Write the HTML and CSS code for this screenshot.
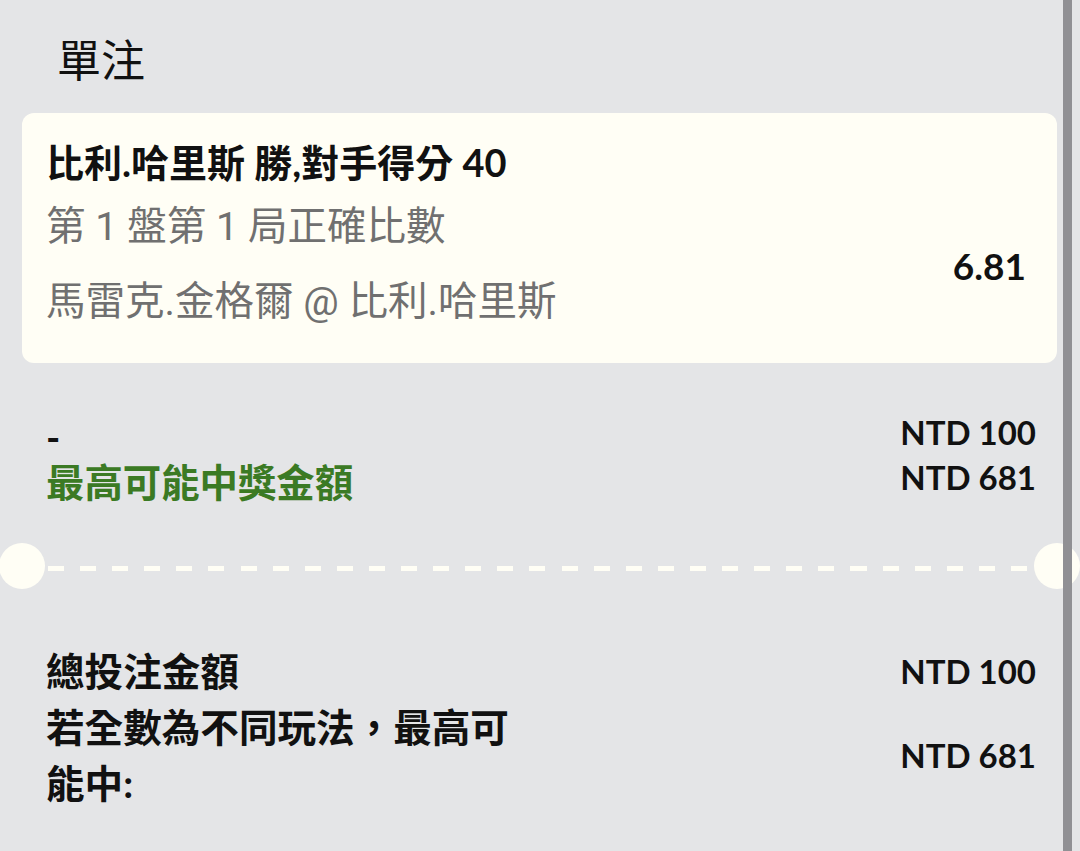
FILE: index.html
```html
<!DOCTYPE html>
<html lang="zh-Hant">
<head>
<meta charset="utf-8">
<title>單注</title>
<link rel="stylesheet" href="styles.css">
</head>
<body>
<div class="screen">
  <h1 class="title">單注</h1>

  <section class="card">
    <div class="card-main">
      <div class="pick">比利.哈里斯 勝,對手得分 40</div>
      <div class="market">第 1 盤第 1 局正確比數</div>
      <div class="event">馬雷克.金格爾 @ 比利.哈里斯</div>
    </div>
    <div class="odds">6.81</div>
  </section>

  <section class="stake">
    <div class="stake-labels">
      <div class="dash">-</div>
      <div class="win-label">最高可能中獎金額</div>
    </div>
    <div class="stake-values">
      <div class="amount">NTD 100</div>
      <div class="amount">NTD 681</div>
    </div>
  </section>

  <div class="divider">
    <span class="notch"></span>
    <span class="dashes"></span>
    <span class="notch"></span>
  </div>

  <section class="totals">
    <div class="total-label">總投注金額</div>
    <div class="amount total-value">NTD 100</div>
    <div class="total-label wrap">若全數為不同玩法，最高可能中:</div>
    <div class="amount total-value">NTD 681</div>
  </section>

  <div class="scrollbar"></div>
</div>
</body>
</html>
```

FILE: styles.css
```css
html, body {
  margin: 0;
  padding: 0;
}

body {
  background: #e4e5e7;
  font-family: Lato, "Noto Sans CJK TC", sans-serif;
  color: #111;
}

.screen {
  position: relative;
  width: 1080px;
  height: 851px;
  overflow: hidden;
  padding: 0 23px 0 22px;
  box-sizing: border-box;
}

.title {
  margin: 28px 0 25px 35px;
  font-family: "Noto Sans CJK TC", sans-serif;
  font-size: 44px;
  line-height: 60px;
  font-weight: 400;
  color: #111;
}

.card {
  display: flex;
  justify-content: space-between;
  background: #fffef5;
  border-radius: 12px;
  padding: 24px 31px 36px 24px;
}

.pick {
  font-size: 38px;
  line-height: 50px;
  font-weight: 700;
}

.market,
.event {
  font-family: Roboto, "Noto Sans CJK TC", sans-serif;
  font-size: 39.5px;
  line-height: 50px;
  color: #707070;
}

.market {
  margin-top: 15px;
}

.event {
  margin-top: 25px;
}

.odds {
  align-self: flex-end;
  margin-bottom: 36px;
  font-size: 37px;
  line-height: 50px;
  font-weight: 700;
}

.stake {
  display: flex;
  justify-content: space-between;
  padding: 47px 21px 0 24px;
  margin-bottom: 38px;
}

.stake-labels {
  padding-top: 5px;
  font-size: 38.4px;
  line-height: 45px;
  font-weight: 700;
}

.win-label {
  color: #3b7a24;
}

.amount {
  font-size: 33px;
  line-height: 45px;
  font-weight: 700;
  text-align: right;
}

.divider {
  display: flex;
  align-items: center;
  margin: 0 -23px;
  height: 46px;
}

.notch {
  flex: none;
  width: 46px;
  height: 46px;
  border-radius: 50%;
  background: #fffef5;
}

.dashes {
  flex: 1;
  height: 5px;
  margin: 4px 4px 0 3px;
  background: repeating-linear-gradient(90deg, #fffef5 0 16px, transparent 16px 32.1px);
}

.totals {
  display: grid;
  grid-template-columns: 475px 1fr;
  align-items: center;
  padding: 54px 21px 0 24px;
}

.total-label {
  font-size: 38.6px;
  line-height: 56px;
  font-weight: 700;
}

.total-value {
  line-height: 56px;
}

.scrollbar {
  position: absolute;
  top: 0;
  bottom: 0;
  right: 8px;
  width: 9px;
  background: #909094;
}
```
